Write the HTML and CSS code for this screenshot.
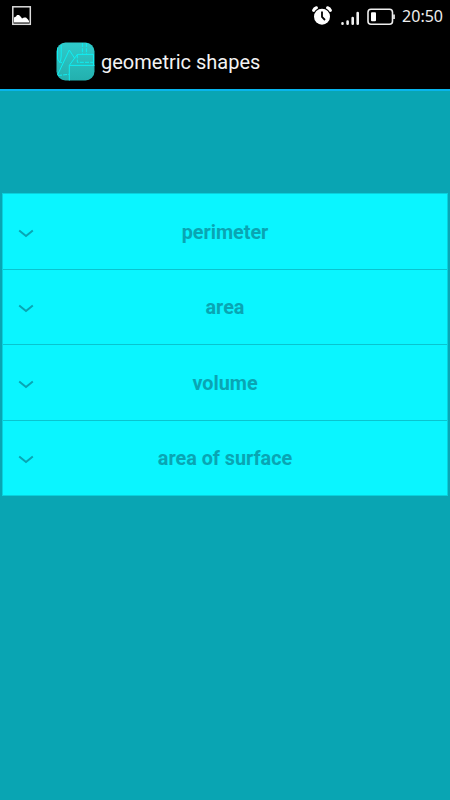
FILE: index.html
```html
<!DOCTYPE html>
<html lang="en">
<head>
    <meta charset="UTF-8">
    <meta name="viewport" content="width=device-width, initial-scale=1.0">
    <title>geometric shapes</title>
    <link rel="stylesheet" href="styles.css">
</head>
<body>
    <div class="status-bar">
        <svg class="picture" width="20" height="20" viewBox="0 0 20 20">
            <rect x=".8" y=".8" width="17.5" height="17.5" fill="none" stroke="#ddd" stroke-width="1.5"/>
            <path d="M2 16.5V11.5L4 10.5L5 9H7L9 11L10 12.5L12 11.5H14L16 13.5L17 15V16.5Z" fill="#fff"/>
        </svg>
        <div class="status-icons">
            <svg class="alarm" width="20" height="20" viewBox="0 0 20 20">
                <circle cx="10" cy="10.7" r="8" fill="#fff"/>
                <path d="M1.6 4.4Q2.4 2.4 4.4 1.8M18.4 4.4Q17.6 2.4 15.6 1.8" fill="none" stroke="#fff" stroke-width="3" stroke-linecap="round"/>
                <path d="M10 5.5V11L13 14" fill="none" stroke="#000" stroke-width="1.8"/>
            </svg>
            <svg class="signal" width="19" height="15" viewBox="0 0 19 15">
                <path d="M1.5 12.4V12.7M6.6 10.5V12.7M11.7 7V12.7M16.7 2V12.7" stroke="#f2f2f2" stroke-width="2.6" stroke-linecap="round"/>
            </svg>
            <svg class="battery" width="29" height="18" viewBox="0 0 29 18">
                <rect x="1" y="1.3" width="24.5" height="15" rx="3" fill="none" stroke="#eee" stroke-width="1.6"/>
                <rect x="4" y="4.3" width="5" height="9" rx="1" fill="#fff"/>
                <path d="M27 6.5V11" stroke="#eee" stroke-width="1.7"/>
            </svg>
            <span class="clock">20:50</span>
        </div>
    </div>

    <div class="action-bar">
        <svg class="logo" width="39" height="39" viewBox="0 0 39 39">
            <defs>
                <linearGradient id="tile" x1="0" y1="0" x2="0" y2="1">
                    <stop offset="0" stop-color="#2fcbcb"/>
                    <stop offset="1" stop-color="#23b0ae"/>
                </linearGradient>
                <clipPath id="tile-clip"><rect x=".5" y=".5" width="38" height="38" rx="9"/></clipPath>
            </defs>
            <rect x=".5" y=".5" width="38" height="38" rx="9" fill="url(#tile)"/>
            <g clip-path="url(#tile-clip)" fill="none" stroke="#10eef2" stroke-width="1">
                <path d="M1.5 5V16Q2 20.5 6 20.5M5.2 3V14Q5 19 3.5 20.5"/>
                <path d="M1.5 33L13.3 8L18.7 16.3"/>
                <path d="M13.3 39V23.4H39M21.3 12.4H37.5V23.4M13.3 23.4L21.3 12.4"/>
                <path d="M21.3 12.4V20.3H38M26.4 1V12.4M30.4 1V12.4M2 33.5L13 32.3" stroke-dasharray="4 1.2"/>
            </g>
        </svg>
        <h1>geometric shapes</h1>
    </div>

    <div class="shape-list">
        <div class="row">
            <svg class="arrow" width="16" height="10" viewBox="0 0 16 10"><path d="M1.2 1.5L8 7L14.8 1.5"/></svg>
            <span>perimeter</span>
        </div>
        <div class="row">
            <svg class="arrow" width="16" height="10" viewBox="0 0 16 10"><path d="M1.2 1.5L8 7L14.8 1.5"/></svg>
            <span>area</span>
        </div>
        <div class="row">
            <svg class="arrow" width="16" height="10" viewBox="0 0 16 10"><path d="M1.2 1.5L8 7L14.8 1.5"/></svg>
            <span>volume</span>
        </div>
        <div class="row">
            <svg class="arrow" width="16" height="10" viewBox="0 0 16 10"><path d="M1.2 1.5L8 7L14.8 1.5"/></svg>
            <span>area of surface</span>
        </div>
    </div>
</body>
</html>
```
FILE: styles.css
```css
body {
    margin: 0;
    height: 800px;
    overflow: hidden;
    background-color: #09a5b3;
    font-family: Roboto, sans-serif;
}
.status-bar {
    display: flex;
    justify-content: space-between;
    height: 32px;
    padding: 0 7px 0 12px;
    background-color: #000;
}
.picture {
    margin-top: 6px;
}
.status-icons {
    display: flex;
    align-items: flex-start;
}
.alarm {
    margin: 6px 9px 0 0;
}
.signal {
    margin: 11px 7px 0 0;
}
.battery {
    margin: 8px 6px 0 0;
}
.clock {
    color: #eee;
    font-family: "Noto Sans", sans-serif;
    font-size: 16px;
    line-height: 32px;
}
.action-bar {
    display: flex;
    align-items: center;
    box-sizing: border-box;
    height: 59px;
    padding: 1px 0 0 56px;
    background-color: #000;
    border-bottom: 2px solid #08b5ed;
}
h1 {
    margin: 2px 0 0 6px;
    color: #f3f3f3;
    font-size: 20px;
    font-weight: 400;
    line-height: 30px;
}
.shape-list {
    display: grid;
    grid-template-rows: 75px 75px 76px 75px;
    margin: 102px 2px 0;
    border: 1px solid #09d0dc;
    background-color: #0af5ff;
}
.row {
    display: grid;
    grid-template-columns: 46px 1fr 46px;
    align-items: center;
    color: #09a5b3;
    font-size: 19.8px;
    font-weight: 700;
    line-height: 24px;
    text-align: center;
}
.row + .row {
    border-top: 1px solid #09c4cf;
}
.row span {
    padding-top: 2px;
}
.arrow {
    margin: 4px 0 0 15px;
    fill: none;
    stroke: #09a5b3;
    stroke-width: 2;
}
```
